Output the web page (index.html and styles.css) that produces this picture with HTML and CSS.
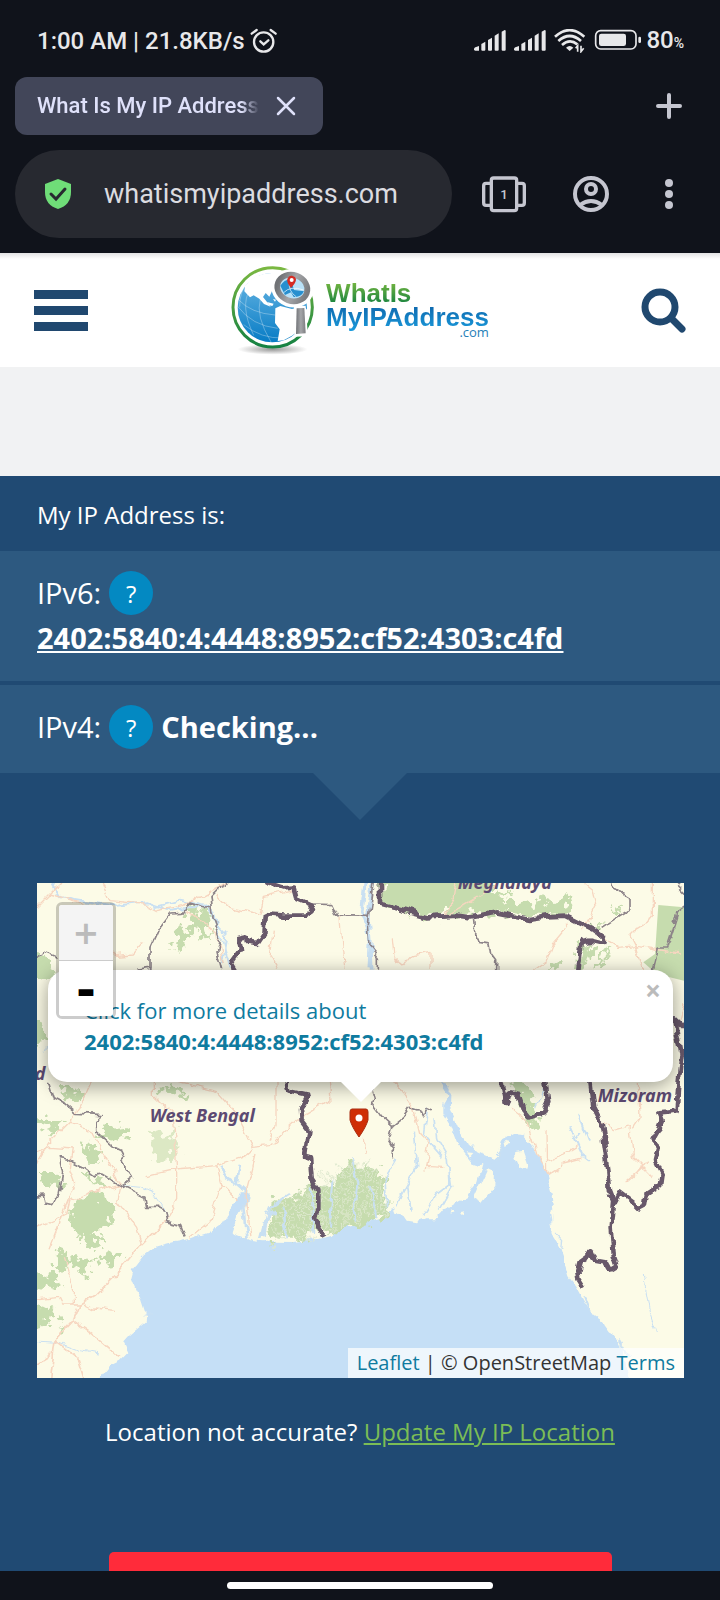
FILE: index.html
```html
<!DOCTYPE html>
<html lang="en">
<head>
  <meta charset="UTF-8">
  <meta name="viewport" content="width=device-width, initial-scale=1.0">
  <title>What Is My IP Address</title>
  <link rel="stylesheet" href="styles.css">
</head>
<body>
  <!-- Status bar -->
  <div class="status-bar">
    <span class="status-left">
      1:00 AM | 21.8KB/s
      <svg width="27" height="26" viewBox="0 0 81 78" fill="none" stroke="#e8e8ea" stroke-width="7" stroke-linecap="round">
        <circle cx="41" cy="42" r="29"/>
        <path d="M5 17 20 6M77 17 62 6M31 40l10 9 14-12"/>
      </svg>
    </span>
    <span class="status-right">
      <svg width="167" height="24" viewBox="0 0 501 72" fill="#e8e8ea">
        <g id="signal">
          <path d="M0 61Q0 57 4 55L15 51V65H4Q0 65 0 61Z"/>
          <path d="M22 45 34 38V62Q34 65 31 65H25Q22 65 22 62Z"/>
          <path d="M42 33 54 26V62Q54 65 51 65H45Q42 65 42 62Z"/>
          <path d="M62 20 74 13V62Q74 65 71 65H65Q62 65 62 62Z"/>
          <path d="M83 8 92 3Q95 3 95 6V62Q95 65 92 65H86Q83 65 83 62Z"/>
        </g>
        <use href="#signal" x="120"/>
        <g fill="none" stroke="#e8e8ea" stroke-width="8">
          <path d="M243 23Q287-16 331 23M253 36Q287 6 321 36M264 48Q287 28 310 46"/>
        </g>
        <path d="M276 56Q287 46 298 56L287 66Z"/>
        <path d="M311 68V50L305 58M321 50V68L329 58" fill="none" stroke="#e8e8ea" stroke-width="5"/>
        <rect x="365" y="5" width="121" height="55" rx="15" fill="none" stroke="#e8e8ea" stroke-width="5"/>
        <rect x="375" y="14" width="81" height="37" rx="7"/>
        <rect x="493" y="23" width="8" height="19" rx="4"/>
      </svg>
      <span>80<small>%</small></span>
    </span>
  </div>

  <!-- Browser tab strip and address bar -->
  <div class="tab-strip">
    <div class="tab">
      <span class="tab-title">What Is My IP Address</span>
      <button class="icon-button" aria-label="Close tab">
        <svg width="20" height="20" viewBox="0 0 20 20" stroke="#dfe1fa" stroke-width="2.5" stroke-linecap="round"><path d="M2 2 18 18M18 2 2 18"/></svg>
      </button>
    </div>
    <button class="icon-button" aria-label="New tab">
      <svg width="26" height="26" viewBox="0 0 26 26" stroke="#c5c6d0" stroke-width="4" stroke-linecap="round"><path d="M13 2V24M2 13H24"/></svg>
    </button>
  </div>
  <div class="toolbar">
    <label class="url-bar">
      <svg width="26" height="32" viewBox="0 0 26 32">
        <path d="M13 1 26 6V14Q26 27 13 31Q0 27 0 14V6Z" fill="#6fdd78"/>
        <path d="M6 16 11 21 20 11" fill="none" stroke="#272930" stroke-width="3" stroke-linecap="round"/>
      </svg>
      <input type="text" value="whatismyipaddress.com" aria-label="Address">
    </label>
    <div class="toolbar-actions">
      <button class="icon-button" aria-label="Tabs">
        <svg width="44" height="37" viewBox="0 0 132 111" fill="none" stroke="#c5c6d0" stroke-width="10">
          <path d="M28 22H12Q5 22 5 29V80Q5 88 12 88H28M104 22H120Q127 22 127 29V80Q127 88 120 88H104"/>
          <rect x="28" y="6" width="76" height="98" rx="7"/>
          <text x="66" y="70" text-anchor="middle" class="tab-count">1</text>
        </svg>
      </button>
      <button class="icon-button" aria-label="Profile">
        <svg width="38" height="38" viewBox="0 0 38 38" fill="none" stroke="#c5c6d0" stroke-width="4">
          <circle cx="19" cy="19" r="16"/>
          <circle cx="19" cy="14" r="5"/>
          <path d="M8 30Q19 22 30 30"/>
        </svg>
      </button>
      <button class="icon-button" aria-label="Menu">
        <svg width="26" height="32" viewBox="0 0 26 32" fill="#c5c6d0">
          <circle cx="13" cy="5" r="4"/><circle cx="13" cy="16" r="4"/><circle cx="13" cy="27" r="4"/>
        </svg>
      </button>
    </div>
  </div>

  <main class="page">
    <header class="site-header">
      <button class="icon-button" aria-label="Open menu">
        <svg width="54" height="41" viewBox="0 0 54 41" fill="#20486f"><path d="M0 0H54V9H0ZM0 16H54V25H0ZM0 32H54V41H0Z"/></svg>
      </button>
      <a class="logo" href="#">
        <svg width="84" height="90" viewBox="22 28 252 270">
          <defs>
            <linearGradient id="ring" x2="0" y2="1"><stop offset="0" stop-color="#7ab841"/><stop offset="1" stop-color="#148142"/></linearGradient>
            <linearGradient id="sea" x2="0" y2="1"><stop offset="0" stop-color="#6bb7e4"/><stop offset="1" stop-color="#077cc5"/></linearGradient>
            <linearGradient id="metal"><stop offset="0" stop-color="#707276"/><stop offset=".5" stop-color="#a5a6a9"/><stop offset="1" stop-color="#7c7d80"/></linearGradient>
            <radialGradient id="shade"><stop offset="0" stop-color="#999"/><stop offset="1" stop-color="#999" stop-opacity="0"/></radialGradient>
          </defs>
          <ellipse cx="147" cy="281" rx="105" ry="16" fill="url(#shade)"/>
          <circle cx="147" cy="155" r="119" fill="#fff" stroke="url(#ring)" stroke-width="9"/>
          <circle cx="146" cy="156" r="104" fill="url(#sea)"/>
          <path d="M64 92 80 72 98 62 123 54 165 50 162 85 172 113 157 118 145 106 137 123 126 112 118 124 130 139 141 153 121 145 107 129 90 119 79 125 62 107Z" fill="#fff"/>
          <path d="M130 139 150 144 146 151 137 149ZM148 130 157 132 154 138ZM155 158 170 151 205 160 240 150 256 170 238 215 205 240 180 254 162 256 168 221 154 202Z" fill="#fff"/>
          <g fill="none" stroke="#fff" stroke-width="2" opacity=".45">
            <path d="M42 152Q85 210 162 218M60 207Q112 249 178 247M79 101Q48 151 90 239M110 130Q95 181 142 259M44 132Q83 173 154 178M69 85Q48 108 48 153"/>
          </g>
          <ellipse cx="206" cy="98" rx="64" ry="57" transform="rotate(20 206 98)" fill="#fff"/>
          <ellipse cx="206" cy="97" rx="46" ry="39" transform="rotate(20 206 97)" fill="#b9e1f7" stroke="url(#metal)" stroke-width="17"/>
          <path d="M170 90Q185 68 202 72L211 103 241 107Q232 126 210 124L202 110 184 118Z" fill="#278fcf"/>
          <path d="M180 111Q200 89 240 103M197 78Q194 107 217 123" fill="none" stroke="#fff" stroke-width="2"/>
          <path d="M202 97Q188 80 191 70Q195 59 205 60Q217 63 217 72Q217 80 202 97Z" fill="#d52c24"/>
          <circle cx="204" cy="73" r="6" fill="#fff"/>
          <path d="M211 152 246 150 253 242 213 243Z" fill="#fff"/>
          <path d="M219 158 242 157 246 233 217 235Z" fill="url(#metal)"/>
        </svg>
        <span class="logo-text">
          <span class="logo-green">WhatIs</span>
          <span class="logo-blue">MyIPAddress</span>
          <span class="logo-com">.com</span>
        </span>
      </a>
      <button class="icon-button" aria-label="Search">
        <svg width="45" height="45" viewBox="0 0 45 45" fill="none" stroke="#20486f"><circle cx="19" cy="19" r="15" stroke-width="7"/><path d="M30 30 41 41" stroke-width="7" stroke-linecap="round"/></svg>
      </button>
    </header>

    <div class="ad-space"></div>

    <section class="ip-section">
      <h1 class="ip-title">My IP Address is:</h1>
      <div class="ip-row">
        <span>IPv6:</span>
        <button class="help">?</button>
        <a class="ip-value" href="#">2402:5840:4:4448:8952:cf52:4303:c4fd</a>
      </div>
      <div class="ip-row ip-row-last">
        <span>IPv4:</span>
        <button class="help">?</button>
        <strong>Checking...</strong>
      </div>

      <div class="map">
        <svg class="map-tiles" viewBox="21 27 1941 1485" preserveAspectRatio="xMidYMid slice">
          <defs>
            <pattern id="mangrove" width="34" height="58" patternUnits="userSpaceOnUse">
              <path d="M4 0Q12 14 5 28T8 58M22 0Q15 16 24 32T20 58" fill="none" stroke="#dfe9cf" stroke-width="4"/>
            </pattern>
            <!-- breaks up straight segments into natural outlines -->
            <filter id="rough" filterUnits="userSpaceOnUse" x="-60" y="-60" width="2120" height="1720">
              <feTurbulence type="fractalNoise" baseFrequency="0.025" numOctaves="3" seed="4"/>
              <feDisplacementMap in="SourceGraphic" scale="26" xChannelSelector="R" yChannelSelector="G"/>
            </filter>
            <filter id="very-rough" filterUnits="userSpaceOnUse" x="-60" y="-60" width="2120" height="1720">
              <feTurbulence type="fractalNoise" baseFrequency="0.035" numOctaves="3" seed="9"/>
              <feDisplacementMap in="SourceGraphic" scale="75" xChannelSelector="R" yChannelSelector="G"/>
            </filter>
          </defs>
          <rect x="0" y="0" width="2000" height="1600" fill="#fcfbe7"/>

          <!-- Bay of Bengal -->
          <g filter="url(#rough)">
            <path class="water" d="M200 1540 210 1512 240 1475 270 1460 295 1435 280 1402 300 1380 350 1338 352 1324 338 1310 320 1255 304 1215 312 1185 340 1148 380 1117 430 1104 480 1095 540 1074 575 1050 600 1010 620 983 632 955 654 955 648 985 625 1025 608 1080 640 1092 668 1105 700 1108 730 1103 790 1104 850 1096 900 1082 960 1055 1050 1032 1070 1012 1090 1003 1115 1018 1130 1040 1158 1045 1184 1036 1220 1036 1240 1010 1270 990 1310 968 1345 910 1350 870 1380 858 1410 830 1420 795 1450 778 1475 780 1500 805 1523 850 1548 900 1565 960 1570 1010 1564 1080 1590 1120 1605 1165 1618 1210 1640 1240 1670 1295 1690 1325 1720 1345 1750 1385 1780 1422 1800 1540Z"/>
            <path class="water" d="M1230 627 1262 635 1260 700 1290 770 1330 825 1395 855 1370 882 1325 865 1285 815 1262 755 1240 720 1240 690 1255 665Z"/>
          </g>

          <!-- Forest -->
          <g class="forest" filter="url(#very-rough)">
            <path d="M1055 -20 1055 90 1180 125 1400 115 1500 130 1610 122 1635 95 1600 70 1570 90 1530 70 1515 105 1490 70 1460 88 1410 85 1440 60 1390 50 1360 -20Z"/>
            <path d="M1650 205 1690 210 1670 285 1640 290ZM1585 265 1597 258 1590 290 1570 290Z"/>
            <path d="M475 110 505 105 530 125 540 200 520 200 505 160 490 185 475 170 455 236 430 225 445 165 490 160Z"/>
            <path d="M-20 240 60 250 75 300 50 320 -20 315ZM-20 440 50 460 55 505 -20 515ZM85 630 150 655 150 680 115 675ZM390 640 440 635 470 660 420 665Z"/>
            <path d="M130 980 190 955 250 990 235 1050 200 1080 210 1125 175 1130 120 1050ZM-20 1180 80 1205 90 1230 -20 1255ZM65 1155 90 1115 110 1150 145 1145 180 1160 160 1210 125 1170 90 1190ZM190 1160 240 1135 280 1140 260 1160 210 1165ZM-20 1310 60 1300 80 1340 -20 1365ZM88 1340 102 1350 95 1370Z"/>
            <path d="M-20 725 80 735 110 750 80 770 -20 755ZM170 805 200 830 210 870 165 850ZM220 765 300 755 290 785 250 800 210 785ZM25 900 80 900 110 930 90 955 50 930ZM165 900 230 920 220 945 165 910Z"/>
            <path d="M363 765 400 790 440 765 430 870 390 865 365 825Z" opacity=".6"/>
            <path d="M730 990 800 960 850 930 920 930 940 870 980 860 1000 890 1040 880 1068 930 1070 1015 1045 1045 990 1060 960 1050 900 1080 870 1060 810 1100 780 1100 760 1070 735 1110 715 1080Z"/>
            <path d="M1435 610 1490 640 1525 735 1527 755 1490 755 1480 690ZM1745 95 1785 110 1770 118ZM1680 150 1725 155 1710 165ZM1725 220 1735 220 1710 275 1695 285Z"/>
            <path fill="url(#mangrove)" d="M730 990 850 930 940 870 980 860 1040 880 1070 1015 960 1050 870 1080 735 1110Z"/>
          </g>
          <path class="forest" d="M1885 93 1962 100 1962 320 1880 300 1840 265 1875 240Z"/>

          <g filter="url(#rough)">
            <!-- Islands in the delta -->
            <path class="land" d="M1455 835 1480 830 1497 880 1470 885 1457 855ZM1375 885 1395 895 1393 930 1350 985 1335 975ZM1340 875 1360 870 1345 925 1325 950ZM1310 835 1330 837 1320 848ZM1425 800 1445 805 1430 820ZM625 1030 637 1075 610 1080ZM1265 1005 1275 1010 1262 1020ZM1287 1018 1305 1015 1300 1030ZM1210 1000 1225 1005 1200 1030 1188 1025ZM1560 1020 1570 1012 1566 1055Z"/>

            <!-- Rivers -->
            <g class="river">
              <path d="M1010 0 995 110 1020 180 1015 280M1035 0 1015 110 1022 200 1025 290" stroke-width="11"/>
              <path d="M50 0 90 70 180 85 260 95 350 85 420 110 480 100 540 100 560 150 590 180 575 270" stroke-width="6"/>
              <path d="M370 100 450 80 530 95 575 190 600 280" stroke-width="5"/>
              <path d="M650 1100 640 1000 655 960 620 930 590 910 575 875M630 875 620 930M700 1090 720 1000 780 960M690 1100 710 1020 735 1010M770 1090 760 1000" stroke-width="8"/>
              <path d="M850 1080 845 940M900 1060 910 920M970 1040 985 930 965 850M1040 1030 1020 940" stroke-width="6"/>
              <path d="M1070 1000 1065 920 1100 860M1100 1000 1115 960 1160 880 1150 770M1180 1025 1220 960 1260 930 1255 850 1220 790 1215 730M1225 1010 1265 940 1255 870M1140 1010 1130 940M1190 700 1180 780 1240 850" stroke-width="5"/>
              <path d="M1620 760 1660 850M1650 720 1680 800M1640 790 1655 770M1655 840 1680 860M1665 1270 1680 1310M1770 1400 1800 1450" stroke-width="6"/>
              <path d="M275 935 330 940 370 960 405 1010M0 1400 80 1405 150 1430 210 1440M340 1320 370 1320M60 475 45 540M1840 1200 1860 1320 1880 1380" stroke-width="3"/>
              <path d="M1580 1080 1598 1100 1595 1125M1395 855 1420 810M1545 640 1520 700" stroke-width="4"/>
            </g>

            <!-- Roads -->
            <g class="road">
              <path d="M0 120 90 30M60 60 150 85 210 200 250 245 310 240 345 200M210 10 240 80 340 90 380 110 460 95 560 40 620 15M560 60 600 100 690 120 700 70 790 50M730 170 720 250 740 290M470 110 560 180 580 270M930 130 935 210 945 285"/>
              <path d="M1090 190 1095 250 1125 275 1150 245 1200 235 1200 285M1280 10 1270 70 1240 130 1400 35M1620 150 1570 210 1550 260 1510 290M1640 10 1690 50 1700 90 1670 150 1650 170M1870 10 1870 130 1820 160 1800 180 1820 220 1950 240M1730 200 1760 220 1820 215M1820 220 1840 290"/>
              <path d="M185 620 150 700 120 740 60 800 30 850 0 900M370 620 370 665 430 720 440 880 440 980 405 1040M440 620 560 650 620 720 670 820 720 815 800 740 900 680 895 620M735 620 735 760 720 800M1095 620 1150 700 1170 780 1200 810 1185 890"/>
              <path d="M350 905 440 885 560 875 640 850 670 825M675 840 645 960 660 1090M560 875 575 930 625 980M575 930 540 1040 480 1090"/>
              <path d="M405 1040 330 1115 260 1200 200 1260 150 1290 130 1340 75 1400 60 1530M130 1340 200 1390 270 1450M75 1400 140 1450 165 1530M0 1480 65 1440" stroke-width="5"/>
              <path d="M120 740 190 780 230 850 270 930 260 980 320 1060 335 1110M0 1070 110 1020 120 980 270 930M0 840 60 820 130 825 120 890 135 930 60 1120M100 1150 130 1240 130 1290M0 1280 90 1270 100 1290 150 1290M160 1290 190 1305 255 1312M1000 790 1005 840"/>
              <path d="M1440 700 1490 740 1520 840 1550 905 1600 870 1660 855M1548 770 1550 900M1550 860 1600 840 1640 815M1185 877 1240 880M1720 745 1750 770 1800 755 1810 850 1840 880 1790 925M1810 760 1830 730 1825 627M1840 880 1865 905M1820 900 1850 860M1940 470 1962 390"/>
            </g>

            <!-- State borders -->
            <g class="border-thin">
              <path d="M640 10 560 45 540 65 545 120 570 190 560 230 575 290M540 105 480 87 460 118 420 120 385 165 360 220 360 280 325 285M845 90 905 92 920 125 1020 127M1035 10 1015 150 1020 220 1045 250 1045 290M0 260 45 235 80 250"/>
              <path d="M1330 130 1335 180 1350 205 1380 210 1385 240 1400 260 1400 290M1740 10 1750 45 1800 75 1800 105 1760 130 1715 160M1930 20 1980 70M1980 90 1945 115 1910 225 1885 225 1870 285"/>
              <path d="M55 620 70 670 100 685 140 718 220 722 200 740 200 775 245 815 275 830 285 850 275 860 310 910 275 935 215 900 190 905 150 875 110 855 85 850 95 900 85 960 65 995 45 990 40 960 0 965M275 935 345 970 350 1000 385 1000 405 1010 410 1040 450 1050 465 1090"/>
              <path d="M1020 635 1030 670 1025 690 1060 735 1085 758 1075 795 1090 820 1090 860M1085 758 1120 730 1140 700 1165 708 1175 730 1190 703 1210 712"/>
            </g>
            <g class="border-thick">
              <path d="M700 20 760 40 790 38 800 75 845 95 835 125 760 125 705 120 700 180 680 210 650 205 650 190 625 195 630 230 605 265 620 290"/>
              <path d="M1050 0 1050 92 1120 110 1190 130 1280 125 1320 130 1400 115 1500 135 1550 127 1610 125 1660 150 1690 165 1725 190 1720 210 1680 200 1655 205 1645 290"/>
              <path d="M770 620 775 652 835 665 810 700 812 740 835 770 825 845 840 850 845 920 865 950 865 1010 855 1030 865 1060 880 1085"/>
              <path d="M1415 615 1430 690 1440 655 1465 660 1480 705 1500 730 1540 715 1555 685 1545 615"/>
              <path d="M1680 615 1690 700 1715 750 1735 890 1740 950 1750 975 1742 1060 1748 1145 1760 1180 1740 1192 1725 1165 1695 1160 1685 1135 1650 1160 1642 1190 1645 1215 1662 1242"/>
              <path d="M1735 960 1755 985 1770 955 1810 985 1825 1000 1845 990 1850 960 1890 935 1895 900 1875 860 1885 820 1865 800 1885 765 1895 740 1885 715 1940 710 1945 630 1955 540 1935 430 1985 480"/>
            </g>
          </g>
          <g class="map-label">
            <text x="1283" y="46">Meghalaya</text>
            <text x="359" y="743">West Bengal</text>
            <text x="1703" y="683">Mizoram</text>
            <text x="14" y="617">d</text>
          </g>
        </svg>

        <div class="popup">
          <a href="#">Click for more details about <b>2402:5840:4:4448:8952:cf52:4303:c4fd</b></a>
          <button class="popup-close" aria-label="Close popup">×</button>
        </div>
        <svg class="marker" width="20" height="30" viewBox="0 0 20 30">
          <path d="M3 1H17Q19 1 19 4V12Q17 19 10 29Q3 19 1 12V4Q1 1 3 1Z" fill="#cf2e06" stroke="#a92c10"/>
          <circle cx="10" cy="10" r="3.5" fill="#fff"/>
        </svg>
        <div class="zoom-control">
          <button class="zoom-in" aria-label="Zoom in" disabled>+</button>
          <button class="zoom-out" aria-label="Zoom out">-</button>
        </div>
        <div class="attribution"><a href="#">Leaflet</a> | © OpenStreetMap <a href="#">Terms</a></div>
      </div>

      <p class="update-location">Location not accurate? <a href="#">Update My IP Location</a></p>
      <button class="cta" aria-label="Hide my IP"></button>
    </section>
  </main>

  <div class="nav-bar"><span class="nav-handle"></span></div>
</body>
</html>
```

FILE: styles.css
```css
* {
  box-sizing: border-box;
}
body {
  margin: 0;
  height: 100vh;
  display: flex;
  flex-direction: column;
  background-color: #10131b;
  font-family: "Open Sans", sans-serif;
  overflow: hidden;
}
button {
  font-family: inherit;
  border: none;
  padding: 0;
  cursor: pointer;
}
svg {
  display: block;
  flex: none;
}
.icon-button {
  background: none;
}

/* Status bar */
.status-bar {
  display: flex;
  justify-content: space-between;
  align-items: center;
  padding: 24px 36px 0 37px;
  height: 58px;
  font: 500 24px/34px Roboto, sans-serif;
  color: #e8e8ea;
}
.status-left,
.status-right {
  display: flex;
  align-items: center;
  gap: 5px;
}
.status-right small {
  font-size: 14px;
}

/* Browser controls */
.tab-strip {
  display: flex;
  justify-content: space-between;
  align-items: center;
  margin-top: 19px;
  padding: 0 38px 0 15px;
}
.tab {
  display: flex;
  align-items: center;
  justify-content: space-between;
  width: 308px;
  height: 58px;
  padding: 0 27px 0 22px;
  border-radius: 12px;
  background-color: #424659;
}
.tab-title {
  width: 222px;
  overflow: hidden;
  white-space: nowrap;
  font: 500 22px/30px Roboto, sans-serif;
  color: #dfe1fa;
  -webkit-mask-image: linear-gradient(to right, #000 92%, transparent);
  mask-image: linear-gradient(to right, #000 92%, transparent);
}
.toolbar {
  display: flex;
  align-items: center;
  justify-content: space-between;
  padding: 15px 38px 15px 15px;
}
.toolbar-actions {
  display: flex;
  align-items: center;
  gap: 46px;
}
.url-bar {
  display: flex;
  align-items: center;
  gap: 33px;
  width: 437px;
  height: 88px;
  padding: 0 30px;
  border-radius: 44px;
  background-color: #272930;
}
.url-bar input {
  flex: 1;
  min-width: 0;
  padding: 0;
  border: none;
  outline: none;
  background: none;
  font: 27px/34px Roboto, sans-serif;
  color: #dcdce0;
}
.tab-count {
  font: 500 40px Roboto, sans-serif;
  fill: #c5c6d0;
  stroke: none;
}

/* Page */
.page {
  flex: 1;
  min-height: 0;
  overflow: hidden;
  display: flex;
  flex-direction: column;
  background-color: #fff;
}
.site-header {
  flex: none;
  display: grid;
  grid-template-columns: 1fr auto 1fr;
  align-items: center;
  height: 114px;
  padding: 0 34px;
  background: linear-gradient(#e2e2e4, #fff 6px);
}
.site-header .icon-button:last-child {
  justify-self: end;
}
.logo {
  display: flex;
  align-items: center;
  gap: 11px;
  text-decoration: none;
}
.site-header .icon-button:first-child {
  justify-self: start;
}
.logo-text {
  display: flex;
  flex-direction: column;
  font: bold 26px/24px "Liberation Sans", sans-serif;
}
.logo-green,
.logo-blue {
  color: transparent;
  -webkit-background-clip: text;
  background-clip: text;
}
.logo-green {
  background-image: linear-gradient(#7ab841, #14813f);
}
.logo-blue {
  margin: -2px 0 -6px;
  line-height: 28px;
  background-image: linear-gradient(#0d62a8, #1a9bdc);
}
.logo-com {
  align-self: flex-end;
  font: 13px/14px "Open Sans", sans-serif;
  color: #2580b8;
}
.ad-space {
  flex: none;
  height: 109px;
  background-color: #f1f2f3;
}

/* IP details */
.ip-section {
  flex: none;
  background-color: #204a73;
  color: #fff;
}
.ip-title {
  margin: 0;
  padding: 21px 37px 19px;
  font-size: 24px;
  font-weight: 400;
  line-height: 35px;
}
.ip-row {
  position: relative;
  display: flex;
  flex-wrap: wrap;
  align-items: center;
  column-gap: 8px;
  padding: 18px 37px 22px;
  border-bottom: 4px solid #204a73;
  background-color: #2d5980;
  background-clip: padding-box;
  font-size: 29px;
  line-height: 48px;
}
.ip-row-last {
  border-bottom: none;
}
.ip-row-last::after {
  content: "";
  position: absolute;
  top: 100%;
  left: 50%;
  margin-left: -47px;
  border: 47px solid transparent;
  border-top-color: #2d5980;
  border-bottom: none;
}
.ip-value {
  flex-basis: 100%;
  color: #fff;
  font-weight: 700;
  line-height: 42px;
}
.help {
  width: 44px;
  height: 44px;
  border-radius: 50%;
  background-color: #0389c2;
  color: #fff;
  font-size: 24px;
}

/* Map */
.map {
  position: relative;
  height: 495px;
  margin: 110px 36px 0 37px;
  overflow: hidden;
}
.map-tiles {
  width: 100%;
  height: 100%;
}
.water {
  fill: #c5dff6;
}
.land {
  fill: #fcfbe7;
}
.forest {
  fill: #c6dcae;
}
.river {
  fill: none;
  stroke: #c9e0f2;
  stroke-linejoin: round;
}
.road {
  fill: none;
  stroke: #f7d6c0;
  stroke-width: 4;
  stroke-linejoin: round;
}
.border-thin {
  fill: none;
  stroke: #8d8489;
  stroke-width: 5;
  stroke-linejoin: round;
}
.border-thick {
  fill: none;
  stroke: #67586b;
  stroke-width: 14;
  stroke-linejoin: round;
}
.map-label {
  font: italic 700 54px "Noto Sans", sans-serif;
  fill: #5c4a72;
}
.popup {
  position: absolute;
  top: 87px;
  left: 11px;
  right: 11px;
  padding: 25px 36px;
  border-radius: 19px;
  background-color: #fff;
  box-shadow: 0 4px 20px rgba(0, 0, 0, 0.4);
  font-size: 22px;
  line-height: 31px;
}
.popup::after {
  content: "";
  position: absolute;
  top: 100%;
  left: 50%;
  margin-left: -20px;
  border: 20px solid transparent;
  border-top-color: #fff;
  border-bottom: none;
}
.popup a,
.attribution a {
  color: #0f7b9f;
  text-decoration: none;
}
.popup b {
  display: block;
}
.popup-close {
  position: absolute;
  top: 8px;
  right: 10px;
  width: 20px;
  height: 24px;
  background: none;
  color: #bbb;
  font-size: 28px;
  font-weight: 700;
  line-height: 24px;
}
.marker {
  position: absolute;
  top: 225px;
  left: 50%;
  margin-left: -12px;
}
.zoom-control {
  position: absolute;
  top: 19px;
  left: 19px;
  width: 60px;
  border: 3px solid rgba(0, 0, 0, 0.2);
  border-radius: 6px;
}
.zoom-control button {
  display: block;
  width: 100%;
  font-family: "DejaVu Sans", sans-serif;
  font-weight: 700;
}
.zoom-in {
  height: 56px;
  border-bottom: 1px solid #ccc;
  border-radius: 3px 3px 0 0;
  background-color: #f4f4f4;
  color: #bbb;
  font-size: 32px;
  line-height: 48px;
}
.zoom-out {
  height: 55px;
  border-radius: 0 0 3px 3px;
  background-color: #fff;
  color: #000;
  font-size: 48px;
  line-height: 48px;
}
.attribution {
  position: absolute;
  right: 0;
  bottom: 0;
  padding: 0 9px;
  background-color: rgba(255, 255, 255, 0.7);
  color: #333;
  font-size: 20px;
  line-height: 30px;
}
.update-location {
  margin: 36px 0 0;
  text-align: center;
  font-size: 24px;
  line-height: 36px;
}
.update-location a {
  color: #7bbd56;
}
.cta {
  display: block;
  width: 503px;
  max-width: 90%;
  height: 70px;
  margin: 102px auto 0;
  border-radius: 5px;
  background-color: #ff2b3a;
}

/* Gesture bar */
.nav-bar {
  display: flex;
  justify-content: center;
  align-items: center;
  height: 29px;
}
.nav-handle {
  width: 266px;
  height: 7px;
  border-radius: 4px;
  background-color: #fff;
}
```
